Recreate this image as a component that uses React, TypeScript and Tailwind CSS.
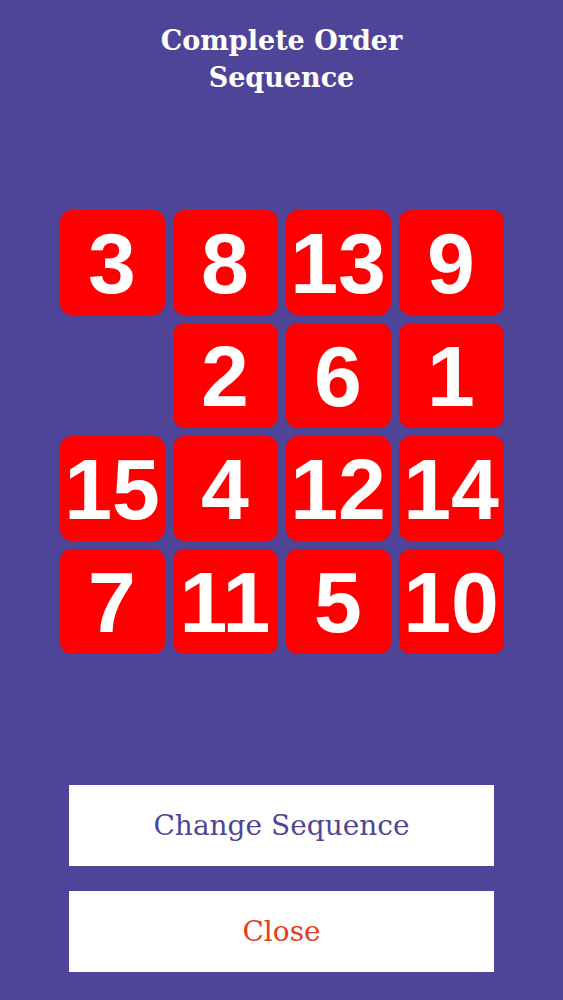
const rows: (number | null)[][] = [
  [3, 8, 13, 9],
  [null, 2, 6, 1],
  [15, 4, 12, 14],
  [7, 11, 5, 10],
];

function Tile({ value }: { value: number | null }) {
  if (value === null) return <div className="w-[105px] h-[105px]" />;
  return (
    <div className="w-[105px] h-[105px] rounded-[12px] bg-[#ff0000] flex items-center justify-center">
      <span className="text-white font-bold text-[86px] leading-none whitespace-nowrap font-['Liberation_Sans',Arial,sans-serif]">
        {value}
      </span>
    </div>
  );
}

export default function App() {
  return (
    <div className="w-full h-[1000px] bg-[#4f4598] flex flex-col items-center font-['DejaVu_Serif',serif]">
      <h1 className="mt-[22px] text-white font-bold text-[27px] leading-[37px] text-center">
        Complete Order
        <br />
        Sequence
      </h1>

      <div className="mt-[114px] grid grid-cols-4 gap-[8px]">
        {rows.flat().map((v, i) => (
          <Tile key={i} value={v} />
        ))}
      </div>

      <div className="mt-[131px] flex flex-col gap-[25px]">
        <button className="w-[425px] h-[81px] bg-white text-[#4f4598] text-[28px]">
          Change Sequence
        </button>
        <button className="w-[425px] h-[81px] bg-white text-[#e63b1e] text-[28px]">
          Close
        </button>
      </div>
    </div>
  );
}
